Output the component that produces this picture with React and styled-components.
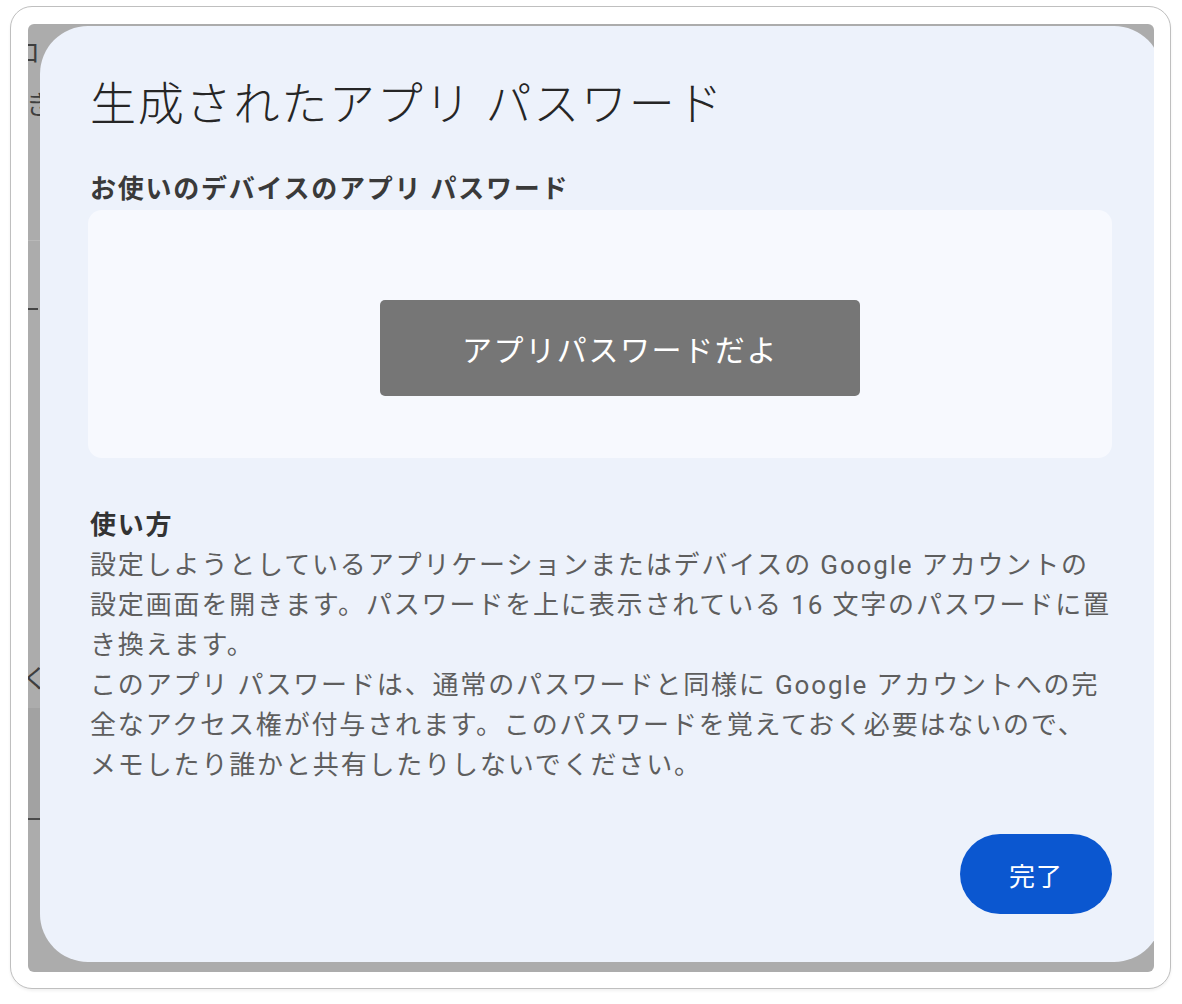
import React from 'react';
import styled, { createGlobalStyle } from 'styled-components';

const GlobalStyle = createGlobalStyle`
  html, body {
    margin: 0;
    padding: 0;
    background: #ffffff;
  }
  body {
    font-family: Roboto, "Noto Sans CJK JP", sans-serif;
  }
`;

const Page = styled.div`
  width: 1182px;
  height: 1004px;
  box-sizing: border-box;
  padding: 6px 11px 15px 10px;
`;

const Frame = styled.div`
  height: 100%;
  box-sizing: border-box;
  border: 1px solid #bfbfbf;
  border-radius: 22px;
  background: #fff;
  padding: 17px 16px 16px 17px;
  box-shadow: 0 2px 3px rgba(0, 0, 0, 0.06);
`;

const Backdrop = styled.div`
  position: relative;
  height: 100%;
  overflow: hidden;
  border-radius: 6px;
  background: #acacac;
`;

// what is left visible of the page behind the dialog
const Behind = styled.div`
  display: flex;
  flex-direction: column;
  color: #3e3e3e;
  font-family: "Noto Sans CJK JP", sans-serif;
`;

const BehindChar = styled.div`
  font-size: 26px;
  line-height: 30px;
  margin-left: ${p => p.$shift || 0}px;
  margin-top: ${p => p.$top || 0}px;
  height: 30px;
`;

const BehindLine = styled.div`
  height: ${p => p.$thick || 1}px;
  width: ${p => p.$w || 40}px;
  background: ${p => p.$color};
  margin-top: ${p => p.$top}px;
`;

const BehindBlock = styled.div`
  height: 110px;
  margin-top: 16px;
  background: #a2a2a2;
  border-bottom: 2px solid #4a4a4a;
`;

const Dialog = styled.section`
  position: absolute;
  left: 12px;
  top: 2px;
  width: 1122px;
  height: 936px;
  box-sizing: border-box;
  padding: 48px 50px 48px 50px;
  border-radius: 48px;
  background: #edf2fb;
  display: flex;
  flex-direction: column;
  font-family: Roboto, "Noto Sans CJK JP", sans-serif;
`;

const Title = styled.h1`
  margin: 0;
  font-size: 46px;
  line-height: 60px;
  font-weight: 300;
  letter-spacing: 1.8px;
  color: #262626;
`;

const Label = styled.h2`
  margin: 37px 0 3px;
  font-size: 26px;
  line-height: 36px;
  font-weight: 700;
  letter-spacing: 1.75px;
  color: #3a3a3a;
`;

const PasswordBox = styled.div`
  height: 248px;
  box-sizing: border-box;
  margin: 0 0 0 -2px;
  padding: 28px 0 0 40px;
  border-radius: 14px;
  background: #f7f9fe;
  display: flex;
  align-items: center;
  justify-content: center;
`;

const PasswordMask = styled.div`
  width: 480px;
  height: 96px;
  border-radius: 5px;
  background: #767676;
  color: #ffffff;
  display: flex;
  align-items: center;
  justify-content: center;
  font-size: 30px;
  letter-spacing: 1.6px;
`;

const HowTo = styled.h3`
  margin: 47px 0 0;
  font-size: 26px;
  line-height: 40px;
  font-weight: 700;
  letter-spacing: 1.75px;
  color: #333333;
`;

const Body = styled.p`
  margin: 0;
  font-size: 26px;
  line-height: 40px;
  letter-spacing: 1.85px;
  color: #5e5e5e;
  white-space: nowrap;
`;

const Footer = styled.div`
  margin-top: auto;
  display: flex;
  justify-content: flex-end;
`;

const DoneButton = styled.button`
  width: 152px;
  height: 80px;
  border: none;
  border-radius: 40px;
  background: #0b57d0;
  color: #ffffff;
  font-family: inherit;
  font-size: 26px;
  letter-spacing: 1px;
  cursor: pointer;
`;

export default function App() {
  return (
    <>
      <GlobalStyle />
      <Page>
        <Frame>
          <Backdrop>
            <Behind>
              <BehindChar $shift={-14} $top={12}>ロ</BehindChar>
              <BehindChar $shift={-2} $top={22}>き</BehindChar>
              <BehindLine $top={122} $color="#b9b9b9" />
              <BehindLine $top={67} $thick={2} $w={10} $color="#444" />
              <BehindChar $shift={-6} $top={352}>く</BehindChar>
              <BehindBlock />
            </Behind>
            <Dialog>
              <Title>生成されたアプリ パスワード</Title>
              <Label>お使いのデバイスのアプリ パスワード</Label>
              <PasswordBox>
                <PasswordMask>アプリパスワードだよ</PasswordMask>
              </PasswordBox>
              <HowTo>使い方</HowTo>
              <Body>
                設定しようとしているアプリケーションまたはデバイスの Google アカウントの<br />
                設定画面を開きます。パスワードを上に表示されている 16 文字のパスワードに置<br />
                き換えます。
              </Body>
              <Body>
                このアプリ パスワードは、通常のパスワードと同様に Google アカウントへの完<br />
                全なアクセス権が付与されます。このパスワードを覚えておく必要はないので、<br />
                メモしたり誰かと共有したりしないでください。
              </Body>
              <Footer>
                <DoneButton>完了</DoneButton>
              </Footer>
            </Dialog>
          </Backdrop>
        </Frame>
      </Page>
    </>
  );
}
